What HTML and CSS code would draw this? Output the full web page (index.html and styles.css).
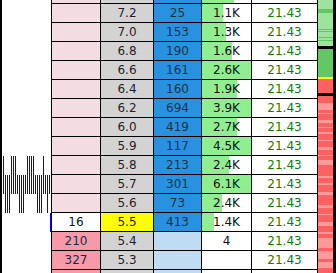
FILE: index.html
```html
<!DOCTYPE html>
<html>
<head>
<meta charset="utf-8">
<link rel="stylesheet" href="styles.css">
</head>
<body>
<div class="page">
  <div class="edge-left"></div>
  <div class="ladder">
    <div class="row partial-top">
      <div class="hist"></div>
      <div class="cell bid"></div>
      <div class="cell price"></div>
      <div class="cell ask"></div>
      <div class="cell vol"><span class="bar" style="width:32px"></span></div>
      <div class="cell pnl"></div>
    </div>
    <div class="row">
      <div class="hist"></div>
      <div class="cell bid"></div>
      <div class="cell price">7.2</div>
      <div class="cell ask">25</div>
      <div class="cell vol"><span class="bar" style="width:21px"></span><span class="num">1.1K</span></div>
      <div class="cell pnl">21.43</div>
    </div>
    <div class="row">
      <div class="hist"></div>
      <div class="cell bid"></div>
      <div class="cell price">7.0</div>
      <div class="cell ask">153</div>
      <div class="cell vol"><span class="bar" style="width:24px"></span><span class="num">1.3K</span></div>
      <div class="cell pnl">21.43</div>
    </div>
    <div class="row">
      <div class="hist"></div>
      <div class="cell bid"></div>
      <div class="cell price">6.8</div>
      <div class="cell ask">190</div>
      <div class="cell vol"><span class="bar" style="width:30px"></span><span class="num">1.6K</span></div>
      <div class="cell pnl">21.43</div>
    </div>
    <div class="row">
      <div class="hist"></div>
      <div class="cell bid"></div>
      <div class="cell price">6.6</div>
      <div class="cell ask">161</div>
      <div class="cell vol"><span class="bar" style="width:49px"></span><span class="num">2.6K</span></div>
      <div class="cell pnl">21.43</div>
    </div>
    <div class="row">
      <div class="hist"></div>
      <div class="cell bid"></div>
      <div class="cell price">6.4</div>
      <div class="cell ask">160</div>
      <div class="cell vol"><span class="bar" style="width:35px"></span><span class="num">1.9K</span></div>
      <div class="cell pnl">21.43</div>
    </div>
    <div class="row">
      <div class="hist"></div>
      <div class="cell bid"></div>
      <div class="cell price">6.2</div>
      <div class="cell ask">694</div>
      <div class="cell vol"><span class="bar" style="width:49px"></span><span class="num">3.9K</span></div>
      <div class="cell pnl">21.43</div>
    </div>
    <div class="row">
      <div class="hist"></div>
      <div class="cell bid"></div>
      <div class="cell price">6.0</div>
      <div class="cell ask">419</div>
      <div class="cell vol"><span class="bar" style="width:35px"></span><span class="num">2.7K</span></div>
      <div class="cell pnl">21.43</div>
    </div>
    <div class="row">
      <div class="hist"></div>
      <div class="cell bid"></div>
      <div class="cell price">5.9</div>
      <div class="cell ask">117</div>
      <div class="cell vol"><span class="bar" style="width:49px"></span><span class="num">4.5K</span></div>
      <div class="cell pnl">21.43</div>
    </div>
    <div class="row">
      <div class="hist sparse-a"></div>
      <div class="cell bid"></div>
      <div class="cell price">5.8</div>
      <div class="cell ask">213</div>
      <div class="cell vol"><span class="bar" style="width:27px"></span><span class="num">2.4K</span></div>
      <div class="cell pnl">21.43</div>
    </div>
    <div class="row">
      <div class="hist dense"></div>
      <div class="cell bid"></div>
      <div class="cell price">5.7</div>
      <div class="cell ask">301</div>
      <div class="cell vol"><span class="bar" style="width:49px"></span><span class="num">6.1K</span></div>
      <div class="cell pnl">21.43</div>
    </div>
    <div class="row">
      <div class="hist sparse-b"></div>
      <div class="cell bid"></div>
      <div class="cell price">5.6</div>
      <div class="cell ask">73</div>
      <div class="cell vol"><span class="bar" style="width:20px"></span><span class="num">2.4K</span></div>
      <div class="cell pnl">21.43</div>
    </div>
    <div class="row current">
      <div class="hist marker"></div>
      <div class="cell bid white">16</div>
      <div class="cell price last">5.5</div>
      <div class="cell ask">413</div>
      <div class="cell vol"><span class="bar" style="width:12px"></span><span class="num">1.4K</span></div>
      <div class="cell pnl">21.43</div>
    </div>
    <div class="row">
      <div class="hist"></div>
      <div class="cell bid strong">210</div>
      <div class="cell price">5.4</div>
      <div class="cell ask light"></div>
      <div class="cell vol">4</div>
      <div class="cell pnl">21.43</div>
    </div>
    <div class="row">
      <div class="hist"></div>
      <div class="cell bid strong">327</div>
      <div class="cell price">5.3</div>
      <div class="cell ask light"></div>
      <div class="cell vol"></div>
      <div class="cell pnl">21.43</div>
    </div>
    <div class="row">
      <div class="hist"></div>
      <div class="cell bid strong"></div>
      <div class="cell price"></div>
      <div class="cell ask light"></div>
      <div class="cell vol"></div>
      <div class="cell pnl"></div>
    </div>
  </div>
  <svg class="overview" width="15" height="273" viewBox="0 0 15 273" shape-rendering="crispEdges">
    <rect fill="#9de29d" x="0" y="0" width="15" height="46"/>
    <rect fill="#63c763" x="0" y="9" width="15" height="4"/>
    <rect fill="#63c763" x="0" y="29" width="15" height="1"/>
    <rect fill="#63c763" x="0" y="31" width="15" height="1"/>
    <rect fill="#63c763" x="0" y="37" width="15" height="1"/>
    <rect fill="#63c763" x="0" y="40" width="15" height="1"/>
    <rect fill="#000000" x="0" y="46" width="15" height="3"/>
    <rect fill="#63c763" x="0" y="49" width="15" height="28"/>
    <rect fill="#ffff00" x="0" y="77" width="15" height="2"/>
    <rect fill="#ff6161" x="0" y="79" width="15" height="14"/>
    <rect fill="#000000" x="0" y="93" width="15" height="3"/>
    <rect fill="#ff6161" x="0" y="96" width="15" height="177"/>
    <rect fill="#ff9a9a" x="0" y="103" width="15" height="7"/>
    <rect fill="#ff9a9a" x="0" y="113" width="15" height="1"/>
    <rect fill="#ff9a9a" x="0" y="120" width="15" height="3"/>
    <rect fill="#ff9a9a" x="0" y="127" width="15" height="1"/>
    <rect fill="#ff9a9a" x="0" y="132" width="15" height="2"/>
    <rect fill="#ff9a9a" x="0" y="140" width="15" height="1"/>
    <rect fill="#ff9a9a" x="0" y="147" width="15" height="3"/>
    <rect fill="#ff9a9a" x="0" y="155" width="15" height="1"/>
    <rect fill="#ff9a9a" x="0" y="160" width="15" height="5"/>
    <rect fill="#ff9a9a" x="0" y="176" width="15" height="2"/>
    <rect fill="#ff9a9a" x="0" y="183" width="15" height="2"/>
    <rect fill="#ff9a9a" x="0" y="192" width="15" height="3"/>
    <rect fill="#ff9a9a" x="0" y="205" width="15" height="3"/>
    <rect fill="#ff9a9a" x="0" y="214" width="15" height="1"/>
    <rect fill="#ff9a9a" x="0" y="222" width="15" height="4"/>
    <rect fill="#ff9a9a" x="0" y="232" width="15" height="2"/>
    <rect fill="#ff9a9a" x="0" y="238" width="15" height="10"/>
    <rect fill="#ff9a9a" x="0" y="251" width="15" height="8"/>
    <rect fill="#ff9a9a" x="0" y="262" width="15" height="6"/>
  </svg>
  <div class="edge-right"></div>
</div>
</body>
</html>
```

FILE: styles.css
```css
html, body {
  margin: 0;
  padding: 0;
  background: #fff;
}

.page {
  display: flex;
  width: 336px;
  height: 273px;
  overflow: hidden;
  font-family: "DejaVu Sans", Verdana, sans-serif;
  font-size: 12px;
}

.edge-left {
  width: 2px;
  flex: none;
  background: #000;
}

.ladder {
  width: 316px;
  flex: none;
  margin-top: -15px;
}

.row {
  display: grid;
  grid-template-columns: 49px 49px 53px 48px 50px 67px;
  height: 19px;
}

.hist {
  height: 19px;
  box-sizing: border-box;
}

.hist.sparse-a {
  background: linear-gradient(to right,
    transparent 0 1px, #0000ff 1px 2px,
    transparent 2px 9px, #0000ff 9px 10px,
    transparent 10px 11px, #0000ff 11px 12px,
    transparent 12px 13px, #0000ff 13px 14px,
    transparent 14px 25px, #0000ff 25px 26px,
    transparent 26px 27px, #0000ff 27px 28px,
    transparent 28px 29px, #0000ff 29px 30px,
    transparent 30px 31px, #0000ff 31px 32px,
    transparent 32px 41px, #0000ff 41px 42px,
    transparent 42px);
}

.hist.sparse-b {
  background: linear-gradient(to right,
    transparent 0 3px, #0000ff 3px 4px,
    transparent 4px 5px, #0000ff 5px 6px,
    transparent 6px 7px, #0000ff 7px 8px,
    transparent 8px 17px, #0000ff 17px 18px,
    transparent 18px 19px, #0000ff 19px 20px,
    transparent 20px 21px, #0000ff 21px 22px,
    transparent 22px 35px, #0000ff 35px 36px,
    transparent 36px 37px, #0000ff 37px 38px,
    transparent 38px 39px, #0000ff 39px 40px,
    transparent 40px 45px, #0000ff 45px 46px,
    transparent 46px);
}

.hist.dense {
  background: repeating-linear-gradient(to right, transparent 0 1px, #0000ff 1px 2px);
}

.hist.marker {
  border-right: 1px solid #0000ff;
}

.cell {
  box-sizing: border-box;
  height: 19px;
  border-left: 1px solid #000;
  border-bottom: 1px solid #000;
  line-height: 18px;
  text-align: center;
  color: #1c1c24;
  white-space: nowrap;
  position: relative;
}

.bid {
  background: #f3dde3;
  color: #1e2a40;
}

.bid.white {
  background: #fff;
  color: #111;
}

.bid.strong {
  background: #f799a9;
}

.price {
  background: #d3d3d3;
  color: #1e1e2e;
}

.price.last {
  background: #ffff00;
}

.ask {
  background: #2891e0;
  color: #1d3149;
}

.ask.light {
  background: #c0dcf3;
}

.vol {
  background: #fff;
  color: #111;
}

.bar {
  position: absolute;
  left: 0;
  top: 0;
  bottom: 0;
  background: #90ee90;
}

.num {
  position: relative;
}

.pnl {
  background: #fff;
  color: #0a800a;
  border-right: 1px solid #000;
}

.overview {
  display: block;
  flex: none;
}

.edge-right {
  width: 3px;
  flex: none;
  background: #000;
}
```
